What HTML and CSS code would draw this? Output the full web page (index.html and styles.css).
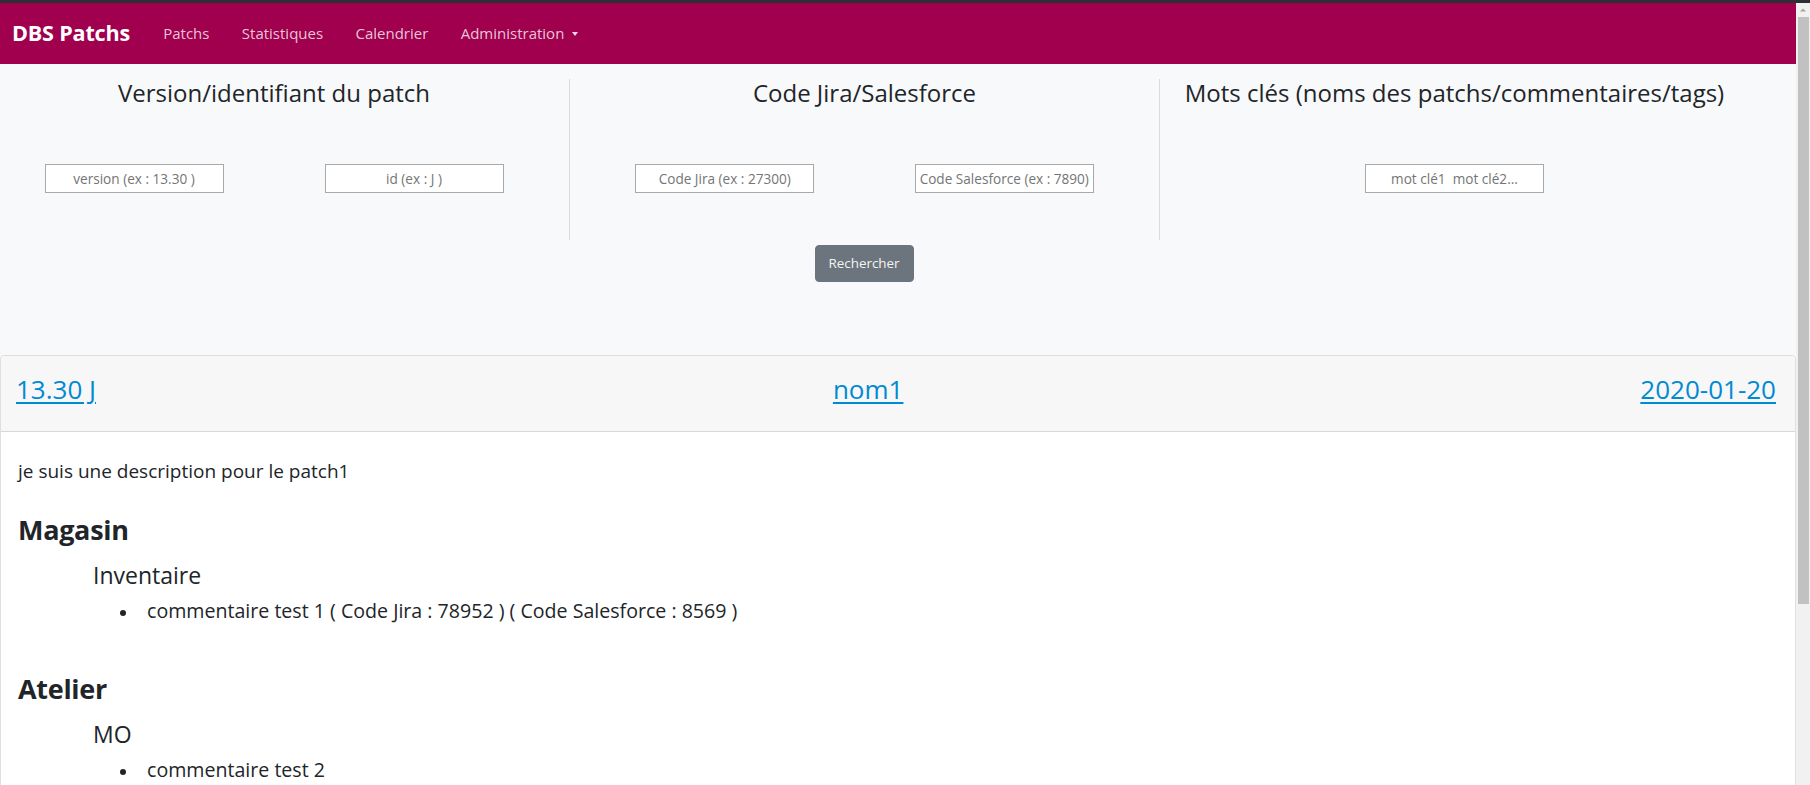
FILE: index.html
```html
<!DOCTYPE html>
<html lang="fr">
<head>
<meta charset="utf-8">
<title>DBS Patchs</title>
<link rel="stylesheet" href="styles.css">
</head>
<body>
<div class="window">
<div class="page">
<nav class="navbar">
  <a class="brand" href="#">DBS Patchs</a>
  <ul class="nav">
    <li><a href="#">Patchs</a></li>
    <li><a href="#">Statistiques</a></li>
    <li><a href="#">Calendrier</a></li>
    <li><a href="#" class="dropdown">Administration</a></li>
  </ul>
</nav>

<section class="search">
  <div class="search-grid">
    <div class="search-col">
      <h4 class="search-title">Version/identifiant du patch</h4>
      <div class="field-row">
        <div class="field"><input type="text" placeholder="version (ex : 13.30 )"></div>
        <div class="field"><input type="text" placeholder="id (ex : J )"></div>
      </div>
    </div>
    <div class="search-col bordered">
      <h4 class="search-title">Code Jira/Salesforce</h4>
      <div class="field-row">
        <div class="field"><input type="text" placeholder="Code Jira (ex : 27300)"></div>
        <div class="field"><input type="text" placeholder="Code Salesforce (ex : 7890)"></div>
      </div>
    </div>
    <div class="search-col bordered">
      <h4 class="search-title">Mots clés (noms des patchs/commentaires/tags)</h4>
      <div class="field-row single">
        <div class="field"><input type="text" placeholder="mot clé1  mot clé2..."></div>
      </div>
    </div>
  </div>
  <div class="search-actions">
    <button class="btn" type="button">Rechercher</button>
  </div>
</section>

<article class="card">
  <header class="card-header">
    <a href="#">13.30 J</a>
    <a href="#">nom1</a>
    <a href="#">2020-01-20</a>
  </header>
  <div class="card-body">
    <p class="description">je suis une description pour le patch1</p>
    <h3 class="domain">Magasin</h3>
    <div class="module">
      <h4 class="module-title">Inventaire</h4>
      <ul class="comments">
        <li>commentaire test 1 ( Code Jira : 78952 ) ( Code Salesforce : 8569 )</li>
      </ul>
    </div>
    <h3 class="domain">Atelier</h3>
    <div class="module">
      <h4 class="module-title">MO</h4>
      <ul class="comments">
        <li>commentaire test 2</li>
      </ul>
    </div>
  </div>
</article>
</div>

<div class="scrollbar" aria-hidden="true">
  <div class="scroll-btn">
    <svg width="14" height="14" viewBox="0 0 14 14"><path d="M4 8.5h6L7 5.5z" fill="#a3a3a3"/></svg>
  </div>
  <div class="scroll-track">
    <div class="scroll-thumb"></div>
  </div>
</div>
</div>
</body>
</html>
```

FILE: styles.css
```css
* { box-sizing: border-box; }

html, body {
  margin: 0;
  padding: 0;
  height: 100%;
  overflow: hidden;
}

body {
  font-family: "Open Sans", "Liberation Sans", sans-serif;
  color: #212529;
  background: #ffffff;
  font-size: 19px;
  line-height: 1.5;
  border-top: 3px solid #2c3034;
}

/* page + classic scrollbar column */
.window {
  display: flex;
  height: 100%;
}

.page {
  flex: 1;
  min-width: 0;
  overflow: hidden;
}

.scrollbar {
  width: 14px;
  flex: none;
  display: flex;
  flex-direction: column;
  background: #f1f1f1;
}

.scroll-btn {
  height: 14px;
  display: flex;
  justify-content: center;
  align-items: center;
  overflow: hidden;
}

.scroll-track {
  flex: 1;
  padding: 0 1px 0 2px;
}

.scroll-thumb {
  height: 587px;
  background: #c1c1c1;
}

/* ---------- navbar ---------- */
.navbar {
  display: flex;
  align-items: center;
  height: 61px;
  background: #a0004d;
  padding: 0 0 0 12px;
}

.brand {
  color: #ffffff;
  font-weight: 700;
  font-size: 21.6px;
  text-decoration: none;
  margin-right: 17px;
  letter-spacing: -0.2px;
}

.nav {
  display: flex;
  list-style: none;
  margin: 0;
  padding: 0;
}

.nav a {
  display: block;
  padding: 0 16.2px;
  font-size: 15px;
  color: rgba(255, 255, 255, 0.78);
  text-decoration: none;
}

.nav a.dropdown::after {
  content: "";
  display: inline-block;
  margin-left: 8px;
  vertical-align: 3px;
  border-top: 4px solid rgba(255, 255, 255, 0.85);
  border-left: 3.5px solid transparent;
  border-right: 3.5px solid transparent;
}

/* ---------- search ---------- */
.search {
  background: #f8f9fa;
  padding: 14.5px 0 73px;
}

.search-grid {
  display: grid;
  grid-template-columns: repeat(3, 590px);
  margin-left: -21px;
}

.search-col {
  padding: 0 15px 47px;
}

.search-col.bordered {
  border-left: 1px solid #dcdcdc;
}

.search-title {
  margin: 0;
  font-size: 24px;
  font-weight: 400;
  line-height: 28.8px;
  text-align: center;
  color: #212529;
}

.field-row {
  display: grid;
  grid-template-columns: 1fr 1fr;
  margin-top: 56.7px;
}

.field-row.single {
  grid-template-columns: 1fr;
}

.field {
  display: flex;
  justify-content: center;
}

.field input {
  width: 179px;
  height: 29px;
  border: 1px solid #a9a9a9;
  border-radius: 0;
  background: #ffffff;
  padding: 1px;
  font-family: "Open Sans", "Liberation Sans", sans-serif;
  font-size: 13.6px;
  text-align: center;
  color: #495057;
}

.field input::placeholder {
  color: #757575;
  opacity: 1;
}

.search-actions {
  width: 1770px;
  margin-left: -21px;
  margin-top: 5px;
  display: flex;
  justify-content: center;
}

.btn {
  height: 36.7px;
  width: 99px;
  padding: 0;
  border: 1px solid #6c757d;
  border-radius: 4px;
  background: #6c757d;
  color: #f4f4f4;
  font-family: "Open Sans", "Liberation Sans", sans-serif;
  font-size: 13.4px;
}

/* ---------- patch card ---------- */
.card {
  border: 1px solid rgba(0, 0, 0, 0.125);
  border-radius: 4px;
  background: #ffffff;
  margin-bottom: 24px;
}

.card-header {
  display: flex;
  justify-content: space-between;
  align-items: center;
  background: #f7f7f7;
  border-bottom: 1px solid rgba(0, 0, 0, 0.125);
  border-radius: 4px 4px 0 0;
  padding: 18px 19px 26px 15px;
}

.card-header a {
  font-size: 26px;
  line-height: 31.2px;
  color: #008ad3;
  text-decoration: underline;
  text-underline-offset: 3px;
}

.card-body {
  padding: 25px 17px 40px;
}

.description {
  margin: 0 0 29px;
  line-height: 28px;
}

.domain {
  margin: 0;
  font-size: 27px;
  font-weight: 700;
  line-height: 32px;
  letter-spacing: -0.3px;
}

.module {
  padding-left: 75px;
  margin-top: 15.5px;
  margin-bottom: 47.2px;
}

.module:last-child {
  margin-bottom: 0;
}

.module-title {
  margin: 0 0 8px;
  font-size: 23px;
  font-weight: 400;
  line-height: 28px;
}

.comments {
  list-style: none;
  margin: 0;
  padding: 0 0 0 27px;
}

.comments li {
  line-height: 28px;
  font-size: 19.6px;
}

.comments li::before {
  content: "";
  display: inline-block;
  width: 6px;
  height: 6px;
  border-radius: 50%;
  background: #212529;
  margin-right: 21px;
  vertical-align: middle;
}
```
